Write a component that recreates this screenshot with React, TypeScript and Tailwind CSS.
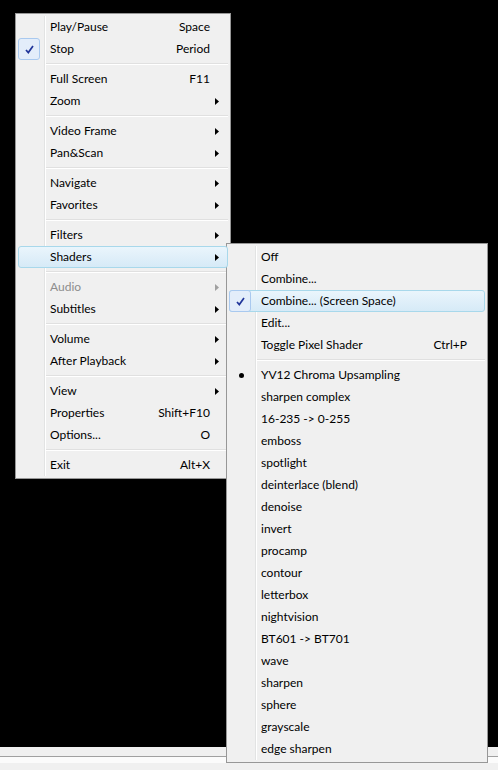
import React from "react";

type Item =
  | { sep: true }
  | {
      sep?: false;
      label: string;
      shortcut?: string;
      sub?: boolean;
      checked?: boolean;
      bullet?: boolean;
      hot?: boolean;
      disabled?: boolean;
    };

const SEP: Item = { sep: true };

const mainItems: Item[] = [
  { label: "Play/Pause", shortcut: "Space" },
  { label: "Stop", shortcut: "Period", checked: true },
  SEP,
  { label: "Full Screen", shortcut: "F11" },
  { label: "Zoom", sub: true },
  SEP,
  { label: "Video Frame", sub: true },
  { label: "Pan&Scan", sub: true },
  SEP,
  { label: "Navigate", sub: true },
  { label: "Favorites", sub: true },
  SEP,
  { label: "Filters", sub: true },
  { label: "Shaders", sub: true, hot: true },
  SEP,
  { label: "Audio", sub: true, disabled: true },
  { label: "Subtitles", sub: true },
  SEP,
  { label: "Volume", sub: true },
  { label: "After Playback", sub: true },
  SEP,
  { label: "View", sub: true },
  { label: "Properties", shortcut: "Shift+F10" },
  { label: "Options...", shortcut: "O" },
  SEP,
  { label: "Exit", shortcut: "Alt+X" },
];

const shaderItems: Item[] = [
  { label: "Off" },
  { label: "Combine..." },
  { label: "Combine... (Screen Space)", checked: true, hot: true },
  { label: "Edit..." },
  { label: "Toggle Pixel Shader", shortcut: "Ctrl+P" },
  SEP,
  { label: "YV12 Chroma Upsampling", bullet: true },
  { label: "sharpen complex" },
  { label: "16-235 -> 0-255" },
  { label: "emboss" },
  { label: "spotlight" },
  { label: "deinterlace (blend)" },
  { label: "denoise" },
  { label: "invert" },
  { label: "procamp" },
  { label: "contour" },
  { label: "letterbox" },
  { label: "nightvision" },
  { label: "BT601 -> BT701" },
  { label: "wave" },
  { label: "sharpen" },
  { label: "sphere" },
  { label: "grayscale" },
  { label: "edge sharpen" },
];

function Check() {
  return (
    <span className="flex h-[22px] w-[22px] items-center justify-center rounded-[3px] border border-[#a9c9ef] bg-[#e3edfa]">
      <svg width="9" height="9" viewBox="0 0 9 9">
        <path d="M1 5 L3.3 7.6 L8 1" fill="none" stroke="#21359a" strokeWidth="1.7" />
      </svg>
    </span>
  );
}

function Arrow({ disabled }: { disabled?: boolean }) {
  return (
    <svg width="4" height="7" viewBox="0 0 4 7">
      <polygon points="0,0 4,3.5 0,7" fill={disabled ? "#a0a0a0" : "#000"} />
    </svg>
  );
}

function Row({ item }: { item: Item }) {
  if (item.sep) {
    return (
      <div className="flex h-[8px] items-center pl-[28px]">
        <div className="h-[2px] w-full border-t border-b border-t-[#e0e0e0] border-b-white" />
      </div>
    );
  }
  return (
    <div
      className={
        item.hot
          ? "relative z-10 flex h-[22px] items-center rounded-[3px] border border-[#a8d8eb] bg-gradient-to-b from-[#eaf5fc] to-[#d6eaf7]"
          : "relative flex h-[22px] items-center border border-transparent"
      }
    >
      <div className="-ml-px flex h-[22px] w-[32px] shrink-0 items-center">
        {item.checked && <Check />}
        {item.bullet && (
          <span className="ml-[10px] h-[5px] w-[5px] rounded-full bg-black" />
        )}
      </div>
      <span
        className={`flex-1 whitespace-nowrap ${item.disabled ? "text-[#8d8d8d]" : "text-black"}`}
      >
        {item.label}
      </span>
      {item.shortcut && <span className="whitespace-nowrap text-black">{item.shortcut}</span>}
      <div className="flex w-[17px] shrink-0 items-center pl-[5px]">
        {item.sub && <Arrow disabled={item.disabled} />}
      </div>
    </div>
  );
}

function Menu({ items, className }: { items: Item[]; className: string }) {
  return (
    <div
      className={`absolute border border-[#979797] bg-[#f0f0f0] p-[2px] text-[12px] leading-none ${className}`}
    >
      <div className="absolute top-[2px] bottom-[2px] left-[28px] w-[2px] border-l border-r border-l-[#e2e3e3] border-r-white" />
      {items.map((it, i) => (
        <Row key={i} item={it} />
      ))}
    </div>
  );
}

export default function App() {
  return (
    <div className="relative flex h-[770px] w-[498px] flex-col overflow-hidden bg-black font-['Lato','Noto_Sans',sans-serif]">
      <div className="h-[747px] shrink-0 bg-black" />
      <div className="h-[9px] shrink-0 bg-[#f0f0f0]" />
      <div className="h-px shrink-0 bg-[#a0a0a0]" />
      <div className="h-[6px] shrink-0 bg-[#fbfbfb]" />
      <div className="flex-1 bg-[#f0f0f0]" />

      <Menu items={mainItems} className="left-[15px] top-[13px] w-[216px]" />
      <Menu items={shaderItems} className="left-[226px] top-[243px] w-[262px]" />
    </div>
  );
}
